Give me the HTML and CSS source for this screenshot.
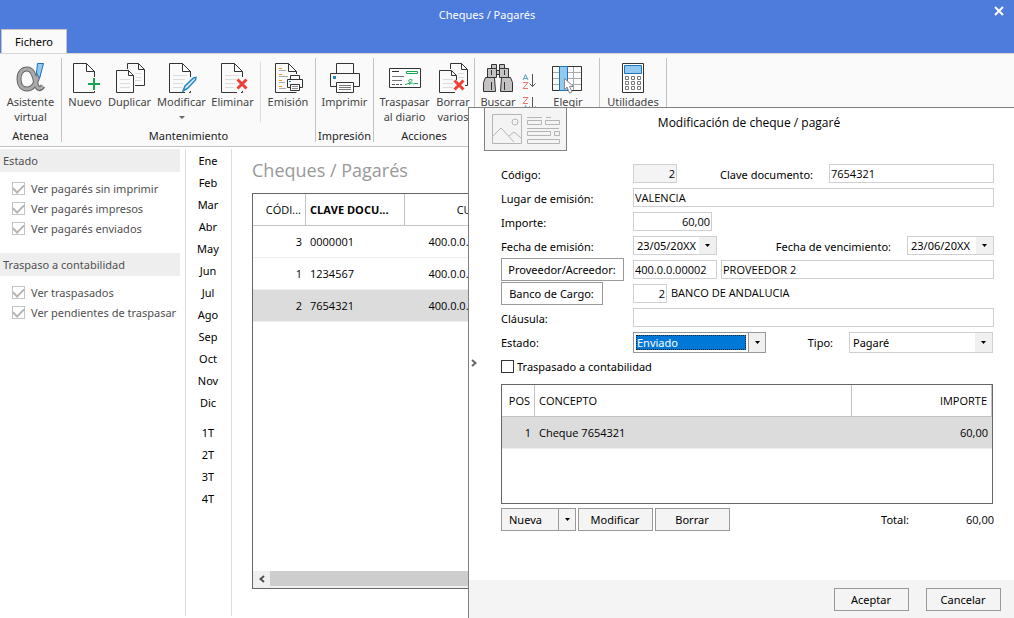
FILE: index.html
```html
<!DOCTYPE html>
<html lang="es">
<head>
<meta charset="utf-8">
<title>Cheques / Pagarés</title>
<link rel="stylesheet" href="styles.css">
</head>
<body>
<svg class="defs" width="0" height="0" aria-hidden="true">
  <symbol id="doc-lines" viewBox="0 0 32 32">
    <path d="M20 30.5H4.5V1.5H17.5L25.5 9.5V15M17.5 1.5V9.5H25.5M25.5 29V30.5H24" fill="none" stroke="#333"/>
    <path d="M8 13.5H22M8 17.5H20M8 21.5H18M8 25.5H17" stroke="#dcdcdc"/>
  </symbol>
  <symbol id="down" viewBox="0 0 5 3"><path d="M0 0H5L2.5 3Z" fill="currentColor"/></symbol>
</svg>
<div class="app">
  <header class="titlebar">
    <h1 class="window-title">Cheques / Pagarés</h1>
    <button class="close" aria-label="Cerrar"><svg width="10" height="10"><path d="M1 1L9 9M9 1L1 9" stroke="#fff" stroke-width="2"/></svg></button>
    <button class="tab">Fichero</button>
  </header>

  <nav class="ribbon">
    <section class="group g-atenea">
      <div class="tools">
        <button class="tool"><svg width="32" height="32" fill="none"><path d="M24 9C22.500 18 19 27 12 27C7 27 4 23 4 17C4 10.500 7.500 7 12 7C18 7 19.500 14 20.500 20C21.500 26 24.500 29 28 24" stroke="#666" stroke-width="5"/><path d="M24 9C22.500 18 19 27 12 27C7 27 4 23 4 17C4 10.500 7.500 7 12 7C18 7 19.500 14 20.500 20C21.500 26 24.500 29 28 24" stroke="#aaa" stroke-width="3"/><path d="M22.500 1.500H28.500L24.500 16.500L21.500 11Z" fill="#90caf0" stroke="#2273b5"/></svg>Asistente<br>virtual</button>
      </div>
      <h2>Atenea</h2>
    </section>
    <section class="group g-mant">
      <div class="tools">
        <button class="tool w46"><svg width="32" height="32"><path d="M20 30.500H4.500V1.500H17.500L25.500 9.500V15M17.500 1.500V9.500H25.500M25.500 29V30.500H20" fill="none" stroke="#333"/><path d="M25 16V28M19 22H31" stroke="#18a551" stroke-width="2"/></svg>Nuevo</button>
        <button class="tool w43"><svg width="32" height="32"><path d="M13.500 7V1.500H24.500L30.500 7.500V23.500H21M24.500 1.500V7.500H30.500M2.500 8.500H14.500L19.500 13.500V30.500H2.500ZM14.500 8.500V13.500H19.500" fill="none" stroke="#333"/><path d="M6 17.500H16M6 21.500H16M6 25.500H16M21 11.500H27M21 15.500H27M21 18.500H27" stroke="#dcdcdc"/></svg>Duplicar</button>
        <button class="tool w61"><svg width="32" height="32"><use href="#doc-lines" x="-1" width="32" height="32"/><path d="M17 29L19 24L27.500 16L30 15.500L29.500 18L21.500 26.500Z" fill="#d7ecfa" stroke="#2687c7" stroke-width="1.500"/></svg>Modificar<i class="caret"></i></button>
        <button class="tool w41"><svg width="32" height="32"><use href="#doc-lines" width="32" height="32"/><path d="M20.500 17.500L29.500 26.500M29.500 17.500L20.500 26.500" stroke="#ee4035" stroke-width="3"/></svg>Eliminar</button>
        <span class="inner-line"></span>
        <button class="tool w54"><svg width="32" height="32"><path d="M3.500 1.500H16.500L24.500 9.500V12M16.500 1.500V9.500H24.500M3.500 1.500V30.500H24.500" fill="none" stroke="#333"/><path d="M7 6.500H10M7 12.500H10M7 18.500H10M7 24.500H10" stroke="#f0980e"/><path d="M7 8.500H14M7 14.500H16M7 20.500H13M7 26.500H14" stroke="#aaa"/><path d="M18.500 17V13.500H27.500V17M18 25.500H15.500V17.500H30.500V25.500H28M18.500 22.500H27.500V28.500H18.500Z" fill="#fafafa" stroke="#333"/><path d="M20 24.500H26M20 26.500H26" stroke="#888"/><path d="M17 19.500H19" stroke="#2687c7"/></svg>Emisión</button>
      </div>
      <h2>Mantenimiento</h2>
    </section>
    <section class="group g-imp">
      <div class="tools">
        <button class="tool"><svg width="32" height="32"><path d="M7.500 11V1.500H24.500V11M7 24.500H1.500V11.500H30.500V24.500H25M7.500 20.500H24.500V30.500H7.500Z" fill="none" stroke="#333"/><path d="M10 23.500H22M10 25.500H22M10 27.500H22" stroke="#777"/><path d="M4 14H7V17H4Z" fill="#2687c7"/></svg>Imprimir</button>
      </div>
      <h2>Impresión</h2>
    </section>
    <section class="group g-acc">
      <div class="tools">
        <button class="tool w61"><svg width="32" height="32"><path d="M.5 6.500H31.500V25.500H.5Z" fill="#fff" stroke="#333"/><path d="M3 9.500H10" stroke="#333"/><path d="M3 14.500H15M3 18.500H13" stroke="#777"/><path d="M3 22.500H13" stroke="#555" stroke-dasharray="3 1"/><path d="M17.500 9.500H28.500V11.500H17.500ZM16 22.500C21 22 26 16.500 21 17.500C17 19.500 23 19 20 22.500C25 19 23 23 26 21.500L29 21.500" fill="none" stroke="#18a551"/></svg>Traspasar<br>al diario</button>
        <button class="tool w36"><svg width="32" height="32"><path d="M13.500 7V1.500H24.500L30.500 7.500V23.500H28M24.500 1.500V7.500H30.500M18 30.500H2.500V8.500H14.500L19.500 13.500V18M14.500 8.500V13.500H19.500" fill="none" stroke="#333"/><path d="M6 17.500H16M6 21.500H16M6 25.500H16M21 11.500H27M21 15.500H27" stroke="#dcdcdc"/><path d="M17.500 18.500L26.500 27.500M26.500 18.500L17.500 27.500" stroke="#ee4035" stroke-width="3"/></svg>Borrar<br>varios</button>
      </div>
      <h2>Acciones</h2>
    </section>
    <section class="group g-view">
      <div class="tools">
        <button class="tool w46"><svg width="32" height="32"><path d="M9.500 2.500H14.500V6.500H9.500ZM17.500 2.500H22.500V6.500H17.500ZM5.500 6.500H14.500V15.500H5.500ZM17.500 6.500H26.500V15.500H17.500ZM14.500 8.500H17.500V12.500H14.500ZM3.500 15.500H12.500L13.500 29.500H1.500V20.500ZM19.500 15.500H28.500L30.500 20.500V29.500H18.500Z" fill="#c4c2c2" stroke="#333"/><path d="M9.500 20V28M9.500 8V13M22.500 20V28M22.500 8V13" stroke="#333"/></svg>Buscar</button>
        <div class="sorts">
          <button aria-label="Orden ascendente"><svg width="16" height="18"><path d="M2 7L4.500 1.500L7 7M3 5.500H6" fill="none" stroke="#5ba3d6"/><path d="M2 9.500H7L2 15.500H7" fill="none" stroke="#ed7570"/><path d="M11.500 1V13.500M8.500 10.500L11.500 13.500L14.500 10.500" fill="none" stroke="#555"/></svg></button>
          <button aria-label="Orden descendente"><svg width="16" height="18"><path d="M2 1.500H7L2 7.500H7" fill="none" stroke="#ed7570"/><path d="M2 15L4.500 9.500L7 15M3 13.500H6" fill="none" stroke="#5ba3d6"/><path d="M11.500 1V13.500M8.500 10.500L11.500 13.500L14.500 10.500" fill="none" stroke="#555"/></svg></button>
        </div>
        <button class="tool w62"><svg width="32" height="32"><path d="M.5 4.500H29.500V28.500H.5ZM.5 10.500H29.500M.5 16.500H29.500M.5 22.500H29.500M21.500 4.500V28.500" fill="none" stroke="#aaa"/><path d="M.5 4.500H29.500V28.500H.5Z" fill="none" stroke="#333"/><path d="M7.500 4.500H15.500V28.500H7.500Z" fill="#90caf0" stroke="#2273b5"/><path d="M12.500 16.500V27.500L15 25L17.500 31L20 30L17.500 24.500H21.500Z" fill="#fff" stroke="#888"/></svg>Elegir</button>
      </div>
    </section>
    <section class="group g-util">
      <div class="tools">
        <button class="tool"><svg width="32" height="32"><path d="M5.500 1.500H26.500V30.500H5.500Z" fill="#fff" stroke="#333"/><path d="M7.500 3.500H24.500V11.500H7.500Z" fill="#90caf0" stroke="#2273b5"/><path d="M8.500 14.500H11.500V17.500H8.500ZM14.500 14.500H17.500V17.500H14.500ZM20.500 14.500H23.500V17.500H20.500ZM8.500 19.500H11.500V22.500H8.500ZM14.500 19.500H17.500V22.500H14.500ZM20.500 19.500H23.500V22.500H20.500ZM8.500 24.500H11.500V27.500H8.500ZM14.500 24.500H17.500V27.500H14.500ZM20.500 24.500H23.500V27.500H20.500Z" fill="none" stroke="#777"/></svg>Utilidades</button>
      </div>
    </section>
  </nav>

  <div class="workspace">
    <aside class="filters">
      <h3>Estado</h3>
      <div class="checks">
        <label><input type="checkbox" class="tick" checked>Ver pagarés sin imprimir</label>
        <label><input type="checkbox" class="tick" checked>Ver pagarés impresos</label>
        <label><input type="checkbox" class="tick" checked>Ver pagarés enviados</label>
      </div>
      <h3>Traspaso a contabilidad</h3>
      <div class="checks">
        <label><input type="checkbox" class="tick" checked>Ver traspasados</label>
        <label><input type="checkbox" class="tick" checked>Ver pendientes de traspasar</label>
      </div>
    </aside>
    <nav class="periods">
      <button>Ene</button><button>Feb</button><button>Mar</button><button>Abr</button><button>May</button><button>Jun</button><button>Jul</button><button>Ago</button><button>Sep</button><button>Oct</button><button>Nov</button><button>Dic</button>
      <button class="quarter">1T</button><button>2T</button><button>3T</button><button>4T</button>
    </nav>
    <main class="listing">
      <h2 class="list-title">Cheques / Pagarés</h2>
      <div class="list-box">
        <table class="grid">
          <colgroup><col class="c-code"><col class="c-key"><col class="c-account"><col></colgroup>
          <thead><tr><th class="num">CÓDI...</th><th class="sorted">CLAVE DOCU...</th><th class="num">CUENTA</th><th></th></tr></thead>
          <tbody>
            <tr><td class="num">3</td><td>0000001</td><td class="num">400.0.0.00002</td><td></td></tr>
            <tr><td class="num">1</td><td>1234567</td><td class="num">400.0.0.00001</td><td></td></tr>
            <tr class="selected"><td class="num">2</td><td>7654321</td><td class="num">400.0.0.00002</td><td></td></tr>
          </tbody>
        </table>
        <div class="scroll"><button aria-label="Desplazar a la izquierda"><svg width="6" height="8"><path d="M5 1L1.500 4L5 7" fill="none" stroke="#505050" stroke-width="2"/></svg></button><span class="thumb"></span></div>
      </div>
    </main>
  </div>

  <section class="dialog" role="dialog" aria-labelledby="dialog-title">
    <button class="collapse" aria-label="Contraer"><svg width="6" height="8"><path d="M1 1L4.500 4L1 7" fill="none" stroke="#666" stroke-width="2"/></svg></button>
    <header class="dialog-head">
      <div class="emblem"><svg width="69" height="30" fill="none" stroke="#b5b5b5"><path d="M.5 .5H29.500V29.500H.5ZM1 22L9 14L22 28M17 22L22 18L29 24M35 3.500H50M54 3.500H59M35.500 6.500H49.500V10.500H35.500ZM53.500 6.500H67.500V10.500H53.500ZM35 14.500H67M35.500 17.500H58.500V21.500H35.500ZM62.500 17.500H67.500V21.500H62.500ZM35.500 25.500H67.500V29.500H35.500Z"/><circle cx="23" cy="8" r="3"/></svg></div>
      <h2 id="dialog-title">Modificación de cheque / pagaré</h2>
    </header>
    <form class="form">
      <div class="row"><label class="lead" for="codigo">Código:</label><input id="codigo" class="field num w44 locked" value="2" readonly><label class="second" for="clave">Clave documento:</label><input id="clave" class="field w165" value="7654321"></div>
      <div class="row"><label class="lead" for="lugar">Lugar de emisión:</label><input id="lugar" class="field fill" value="VALENCIA"></div>
      <div class="row"><label class="lead" for="importe">Importe:</label><input id="importe" class="field num w79" value="60,00"></div>
      <div class="row"><label class="lead" for="emision">Fecha de emisión:</label><span class="combo w84"><select id="emision"><option>23/05/20XX</option></select><span class="arrow"><svg><use href="#down"/></svg></span></span><label class="second" for="venc">Fecha de vencimiento:</label><span class="combo w87"><select id="venc"><option>23/06/20XX</option></select><span class="arrow"><svg><use href="#down"/></svg></span></span></div>
      <div class="row"><span class="lead"><button type="button" class="btn w123">Proveedor/Acreedor:</button></span><input aria-label="Código de proveedor" class="field w84" value="400.0.0.00002"><input aria-label="Nombre de proveedor" class="field fill gap4" value="PROVEEDOR 2"></div>
      <div class="row"><span class="lead"><button type="button" class="btn w102">Banco de Cargo:</button></span><input aria-label="Código de banco" class="field num w34" value="2"><span class="bank">BANCO DE ANDALUCIA</span></div>
      <div class="row"><label class="lead" for="clausula">Cláusula:</label><input id="clausula" class="field fill" value=""></div>
      <div class="row row-state"><label class="lead" for="estado">Estado:</label><span class="combo tall active w133"><select id="estado"><option>Enviado</option></select><span class="arrow"><svg><use href="#down"/></svg></span></span><label class="second" for="tipo">Tipo:</label><span class="combo tall w144"><select id="tipo"><option>Pagaré</option></select><span class="arrow"><svg><use href="#down"/></svg></span></span></div>
      <div class="row"><label class="transfer"><input type="checkbox" class="box">Traspasado a contabilidad</label></div>
      <div class="detail-box">
        <table class="grid detail">
          <colgroup><col class="c-pos"><col><col class="c-amount"></colgroup>
          <thead><tr><th class="num">POS</th><th>CONCEPTO</th><th class="num">IMPORTE</th></tr></thead>
          <tbody><tr class="selected"><td class="num">1</td><td>Cheque 7654321</td><td class="num">60,00</td></tr></tbody>
        </table>
      </div>
      <div class="detail-actions">
        <span class="split"><button type="button">Nueva</button><button type="button" class="more" aria-label="Más opciones"><svg><use href="#down"/></svg></button></span>
        <button type="button" class="btn grey w75">Modificar</button>
        <button type="button" class="btn grey w75">Borrar</button>
        <span class="total-label">Total:</span><span class="total">60,00</span>
      </div>
    </form>
    <footer class="dialog-foot"><button class="btn w75">Aceptar</button><button class="btn w75">Cancelar</button></footer>
  </section>
</div>
</body>
</html>
```
FILE: styles.css
```css
* { box-sizing: border-box; }
body { margin: 0; background: #fff; color: #000; font: 11px/15px "Noto Sans", "Open Sans", sans-serif; }
h1, h2, h3 { margin: 0; font-size: inherit; font-weight: normal; }
button, input, select { font: inherit; color: inherit; margin: 0; padding: 0; }
button { border: 0; background: none; }
svg { display: block; }
.defs { position: absolute; }

.app { position: relative; display: flex; flex-direction: column; min-height: 100vh; overflow: hidden; }

/* Title bar */
.titlebar { position: relative; height: 53px; display: flex; align-items: flex-end; background: #4e7cdc; color: #fff; }
.window-title { position: absolute; top: 7px; left: 0; right: 40px; text-align: center; }
.close { position: absolute; top: 6px; right: 10px; }
.tab { width: 66px; height: 24px; margin-left: 1px; background: #fafafa; color: #000; border: 1px solid #c3c3c3; border-bottom: 0; }

/* Ribbon */
.ribbon { display: flex; height: 94px; padding: 4px 0; background: #fafafa; border-top: 1px solid #d6d6d6; border-bottom: 1px solid #c3c3c3; }
.group { display: flex; flex-direction: column; border-right: 1px solid #c3c3c3; }
.group h2 { text-align: center; white-space: nowrap; color: #222; line-height: 13px; }
.g-atenea { width: 62px; }
.g-mant { width: 254px; }
.g-imp { width: 58px; }
.g-acc { width: 101px; }
.g-view { width: 125px; }
.g-util { width: 67px; }
.tools { display: flex; height: 73px; padding-top: 4px; }
.tool { flex: 1 1 auto; display: flex; flex-direction: column; align-items: center; justify-content: flex-start; white-space: nowrap; color: #444; line-height: 15px; }
.tool svg { flex: none; }
.caret { margin-top: 7px; border: 3px solid transparent; border-top-color: #666; border-bottom: 0; }
.inner-line { flex: none; width: 1px; height: 60px; margin-left: auto; background: #dcdcdc; }
.tool.w46, .tool.w43, .tool.w61, .tool.w41, .tool.w54, .tool.w36, .tool.w62 { flex: none; }
.sorts { width: 16px; padding-top: 11px; display: flex; flex-direction: column; gap: 5px; }

/* Workspace */
.workspace { flex: 1; display: flex; padding: 2px 0; }
.filters { flex: none; width: 185px; padding-right: 5px; color: #505050; }
.filters h3 { height: 23px; padding-left: 3px; line-height: 23px; background: #eee; }
.checks { display: flex; flex-direction: column; padding: 6px 0 15px 12px; }
.checks label { display: flex; align-items: center; gap: 6px; height: 20px; }
.tick { appearance: none; width: 13px; height: 13px; border: 1px solid #c4c4c4; background: #fff; display: grid; place-items: center; }
.tick:checked::before { content: ""; width: 9px; height: 5px; margin-bottom: 2px; border: solid #b4b4b4; border-width: 0 0 2px 2px; transform: rotate(-45deg); }
.periods { flex: none; width: 47px; display: flex; flex-direction: column; border: solid #dcdcdc; border-width: 0 1px; }
.periods button { height: 22px; padding-right: 1px; }
.periods .quarter { margin-top: 8px; }
.listing { flex: 1; display: flex; flex-direction: column; padding: 8px 0 27px 20px; }
.list-title { height: 36px; font: 18px/26px "Open Sans", sans-serif; color: #999; }
.list-box { flex: 1; display: flex; flex-direction: column; justify-content: space-between; border: 1px solid #666; border-right: 0; }

/* Tables */
.grid { width: 100%; table-layout: fixed; border-collapse: separate; border-spacing: 0; font-family: "Open Sans", sans-serif; }
.grid th, .grid td { height: 32px; padding: 0 4px; text-align: left; font-weight: normal; border-bottom: 1px solid #efefef; white-space: nowrap; }
.grid th { border-bottom-color: #c3c3c3; border-right: 1px solid #c3c3c3; }
.grid .num { text-align: right; }
.grid .sorted { font-weight: bold; }
.grid .selected td { background: #dcdcdc; }
.c-code { width: 53px; }
.c-key { width: 99px; }
.c-account { width: 99px; }
.scroll { display: flex; height: 17px; padding-bottom: 2px; background: #f0f0f0; }
.scroll button { width: 17px; display: grid; place-items: center; }
.thumb { flex: 1; background: #cdcdcd; }

/* Dialog */
.dialog { position: absolute; top: 107px; right: 0; bottom: 0; left: 468px; display: flex; flex-direction: column; background: #fff; border: solid #808080; border-width: 1px 0 0 1px; }
.collapse { position: absolute; left: 2px; top: 251px; }
.dialog-head { display: grid; grid-template-columns: 98px 1fr 83px; height: 54px; }
.emblem { width: 83px; height: 43px; margin-left: 15px; padding: 6px 7px; background: #f4f4f4; border: 1px solid #808080; border-top: 0; }
.dialog-head h2 { padding-top: 7px; text-align: center; font-family: "Open Sans", sans-serif; font-size: 12px; }
.form { flex: 1; padding: 0 20px 0 32px; }
.row { display: flex; align-items: flex-start; height: 24px; }
.lead { flex: none; width: 132px; }
label.lead, .second { line-height: 26px; }
.second { margin-left: auto; margin-right: 16px; }
.field { height: 19px; margin-top: 2px; padding: 0 1px 1px; border: 1px solid #d0d0d0; border-radius: 0; background: #fff; font-family: "Open Sans", sans-serif; min-width: 0; }
.field.num { text-align: right; }
.locked { background: #f4f4f4; }
.fill { flex: 1; }
.gap4 { margin-left: 4px; }
.bank { margin-left: 4px; line-height: 22px; font-family: "Open Sans", sans-serif; }
.combo { display: flex; height: 19px; margin-top: 2px; border: 1px solid #d0d0d0; }
.combo.tall { height: 21px; }
.combo select { flex: 1; min-width: 0; appearance: none; border: 0; border-radius: 0; padding-left: 3px; background: #fff; }
.arrow { flex: none; width: 17px; display: grid; place-items: center; background: #f0f0f0; }
.arrow svg, .more svg { width: 5px; height: 3px; }
.combo.active { border-color: #999; }
.combo.active select { margin: 2px; padding-left: 1px; background: #0078d7; color: #fff; outline: 1px dotted #222; outline-offset: -1px; }
.combo.active .arrow { border-left: 1px solid #999; }
.row-state { padding-right: 1px; }
.transfer { display: flex; align-items: center; gap: 3px; height: 24px; }
.box { appearance: none; width: 13px; height: 13px; border: 1px solid #333; background: #fff; }
.detail-box { height: 120px; margin: 6px 1px 4px 0; border: 1px solid #666; }
.c-pos { width: 33px; }
.c-amount { width: 140px; }
.btn { height: 23px; padding-right: 1px; border: 1px solid #999; background: #fff; text-align: center; white-space: nowrap; }
.detail-actions { display: flex; align-items: center; gap: 2px; }
.grey, .split { background: #f4f4f4; }
.split { display: flex; width: 75px; height: 23px; border: 1px solid #999; }
.split button { flex: 1; text-align: left; padding-left: 7px; }
.split .more { flex: none; width: 17px; padding: 0; border-left: 1px solid #999; display: grid; place-items: center; }
.total-label { margin-left: auto; }
.total { width: 83px; text-align: right; font-family: "Open Sans", sans-serif; }
.dialog-foot { display: flex; justify-content: flex-end; gap: 17px; height: 38px; padding: 8px 13px 0 0; background: #f4f4f4; }
.dialog-foot .btn { background: #f4f4f4; }

/* Control widths */
.w34 { width: 34px; }
.w36 { width: 36px; }
.w41 { width: 41px; }
.w43 { width: 43px; }
.w44 { width: 44px; }
.w46 { width: 46px; }
.w54 { width: 54px; }
.w61 { width: 61px; }
.w62 { width: 62px; }
.w75 { width: 75px; }
.w79 { width: 79px; }
.w84 { width: 84px; }
.w87 { width: 87px; }
.w102 { width: 102px; }
.w123 { width: 123px; }
.w133 { width: 133px; }
.w144 { width: 144px; }
.w165 { width: 165px; }
```
